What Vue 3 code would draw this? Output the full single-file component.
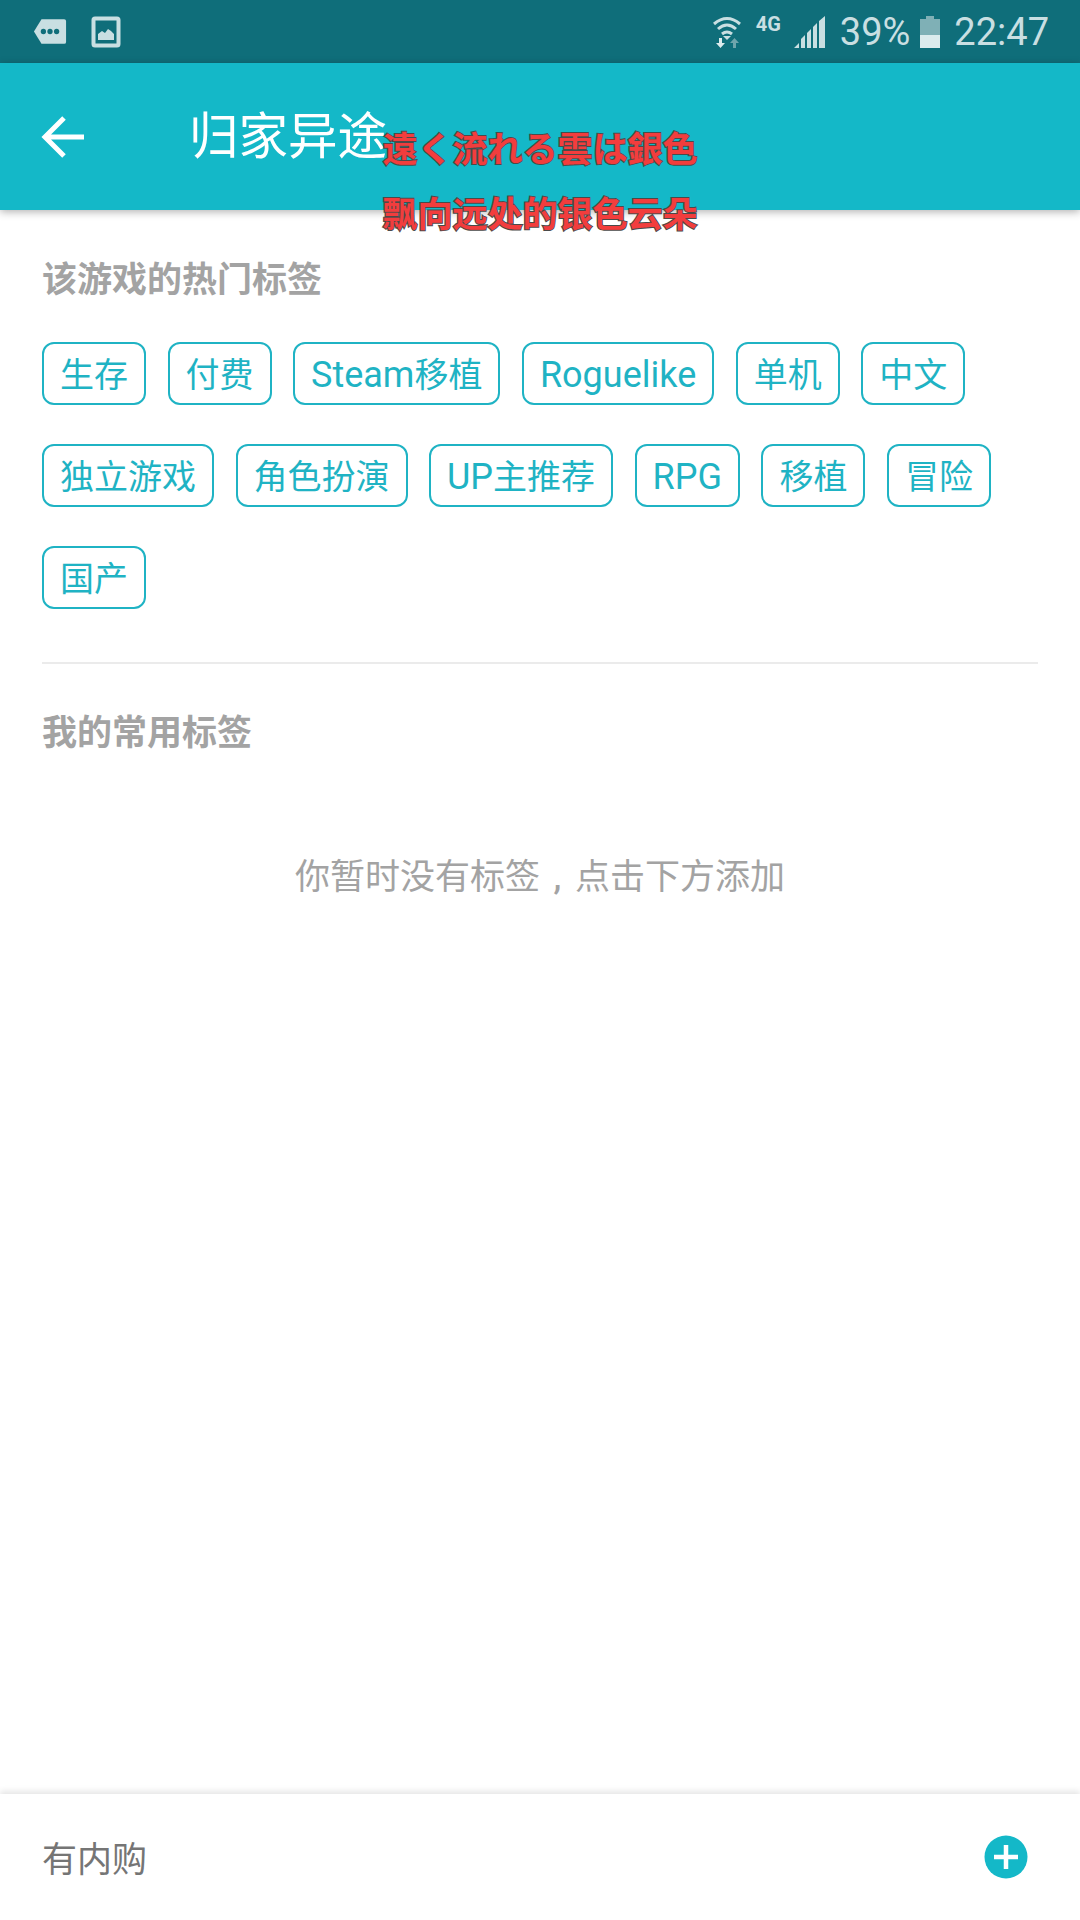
<template>
  <div class="page">
    <!-- status bar -->
    <div class="status-bar">
      <div class="status-left">
        <svg width="34" height="27" viewBox="0 0 36 28">
          <path d="M9 1h24a2 2 0 0 1 2 2v22a2 2 0 0 1-2 2H9L1 14z" fill="#c9dfe2" />
          <circle cx="11" cy="14" r="2.800" fill="#0f6e7a" />
          <circle cx="18" cy="14" r="2.800" fill="#0f6e7a" />
          <circle cx="25" cy="14" r="2.800" fill="#0f6e7a" />
        </svg>
        <svg width="30" height="32" viewBox="0 0 30 32">
          <rect x="2.500" y="2.500" width="25" height="27" rx="1.500" fill="none" stroke="#c9dfe2" stroke-width="4" />
          <path d="M7 24v-6l4-3 3 2 3-4 3 2 3 3v6z" fill="#c9dfe2" />
        </svg>
      </div>
      <div class="status-right">
        <svg class="wifi" width="28" height="32" viewBox="0 0 28 32">
          <path d="M1 8q13-11 26 0M5 13q9-8 18 0M9 18q5-4 10 0" fill="none" stroke="#c9dfe2" stroke-width="3" />
          <path d="M14 24l-4-4h8z" fill="#c9dfe2" />
          <path d="M6 22v5H3l4.500 5 4.500-5H9v-5z" fill="#dcebed" />
          <path d="M20 32v-5h-3l4.500-5 4.500 5h-3v5z" fill="#6fa5ac" />
        </svg>
        <span class="net">4G</span>
        <svg class="signal" width="32" height="32" viewBox="0 0 32 32">
          <path d="M0 32l5-5v5zM7 32v-9l4-4v13zM13 32v-15l4-4v19zM19 32v-21l4-4v25zM25 32V5l6-5v32z" fill="#c9dfe2" />
        </svg>
        <span class="pct">39%</span>
        <svg class="battery" width="20" height="32" viewBox="0 0 20 32">
          <path d="M6 0h8v3h6v29H0V3h6z" fill="#7fb0b6" />
          <rect y="19" width="20" height="13" fill="#dcebed" />
        </svg>
        <span class="clock">22:47</span>
      </div>
    </div>

    <!-- app bar -->
    <header class="app-bar">
      <svg class="back" width="44" height="44" viewBox="0 0 44 44">
        <path d="M43 22H5M23 3L4 22l19 19" fill="none" stroke="#fff" stroke-width="5" />
      </svg>
      <span class="title">归家异途</span>
    </header>

    <main class="content">
      <h2 class="heading">该游戏的热门标签</h2>
      <div class="tags">
        <div v-for="tag in tags" :key="tag" class="tag">
          <span
            v-for="part in splitTag(tag)"
            :key="part"
            :class="{ latin: /^[A-Za-z]/.test(part) }"
          >{{ part }}</span>
        </div>
      </div>
      <div class="divider"></div>
      <h2 class="heading mine">我的常用标签</h2>
      <p class="empty">你暂时没有标签<span class="comma">,</span>点击下方添加</p>
    </main>

    <footer class="bottom-bar">
      <span class="iap">有内购</span>
      <svg width="44" height="44" viewBox="0 0 44 44">
        <circle cx="22" cy="22" r="21.500" fill="#14b8c8" />
        <path d="M22 10v24M10 22h24" stroke="#fff" stroke-width="4.500" />
      </svg>
    </footer>

    <!-- subtitles burned over the page -->
    <div class="subs">
      <div class="sub-line">遠く流れる雲は銀色</div>
      <div class="sub-line">飘向远处的银色云朵</div>
    </div>
  </div>
</template>

<script setup>
const tags = [
  '生存', '付费', 'Steam移植', 'Roguelike', '单机', '中文',
  '独立游戏', '角色扮演', 'UP主推荐', 'RPG', '移植', '冒险',
  '国产',
];

// latin runs are set a little larger than the CJK ones
const splitTag = (tag) => tag.match(/[A-Za-z]+|[^A-Za-z]+/g);
</script>

<style>
html, body {
  margin: 0;
  background: #fff;
}
</style>

<style scoped>
.page {
  position: relative;
  width: 1080px;
  height: 1920px;
  display: flex;
  flex-direction: column;
  overflow: hidden;
  background: #fff;
  font-family: Roboto, "Noto Sans CJK SC", sans-serif;
}

.status-bar {
  height: 63px;
  flex: none;
  box-sizing: border-box;
  display: flex;
  align-items: center;
  justify-content: space-between;
  padding: 0 31px 0 33px;
  background: #0f6e7a;
  color: #c9dfe2;
}

.status-left {
  display: flex;
  align-items: center;
  gap: 24px;
}

.status-right {
  display: flex;
  align-items: center;
}

.wifi {
  margin-right: 15px;
}

.net {
  font-size: 20px;
  font-weight: 700;
  margin: -15px 13px 0 0;
}

.signal {
  margin-right: 14px;
}

.pct,
.clock {
  font-size: 38px;
}

.battery {
  margin: 0 14px 0 10px;
}

.app-bar {
  position: relative;
  z-index: 1;
  height: 147px;
  flex: none;
  display: flex;
  align-items: center;
  background: #14b8c8;
  box-shadow: 0 2px 8px rgba(0, 0, 0, 0.3);
}

.back {
  margin-left: 41px;
}

.title {
  margin: -8px 0 0 104px;
  color: #fff;
  font-size: 49.500px;
}

.content {
  flex: 1;
  padding: 0 42px;
}

.heading {
  margin: 0;
  padding-top: 50px;
  font-size: 35px;
  line-height: 42px;
  font-weight: 700;
  color: #a3a3a3;
}

.tags {
  display: flex;
  flex-wrap: wrap;
  gap: 39px 21.500px;
  margin-top: 40px;
}

.tag {
  box-sizing: border-box;
  height: 63px;
  padding: 2px 16px 0;
  border: 2px solid #1fb3c4;
  border-radius: 12px;
  font-size: 34px;
  line-height: 58px;
  color: #1fb3c4;
}

.latin {
  font-size: 36px;
}

.divider {
  height: 2px;
  margin-top: 53px;
  background: #ebebeb;
}

.heading.mine {
  padding-top: 49px;
}

.empty {
  margin: 102px 0 0;
  text-align: center;
  font-size: 35px;
  line-height: 42px;
  color: #a3a3a3;
}

.comma {
  display: inline-block;
  width: 35px;
  text-align: center;
  font-weight: 500;
}

.bottom-bar {
  position: relative;
  height: 126px;
  flex: none;
  display: flex;
  align-items: center;
  justify-content: space-between;
  padding: 0 52px 0 42px;
  background: #fff;
  box-shadow: 0 -3px 6px rgba(0, 0, 0, 0.1);
}

.iap {
  margin-top: -2px;
  font-size: 35px;
  color: #757575;
}

.subs {
  position: absolute;
  z-index: 2;
  top: 129px;
  left: 0;
  width: 1080px;
  text-align: center;
}

.sub-line {
  height: 65px;
  line-height: 44px;
  font-size: 35px;
  font-weight: 700;
  color: #f23d3d;
  -webkit-text-stroke: 2px #4a4a4a;
  paint-order: stroke fill;
}
</style>
